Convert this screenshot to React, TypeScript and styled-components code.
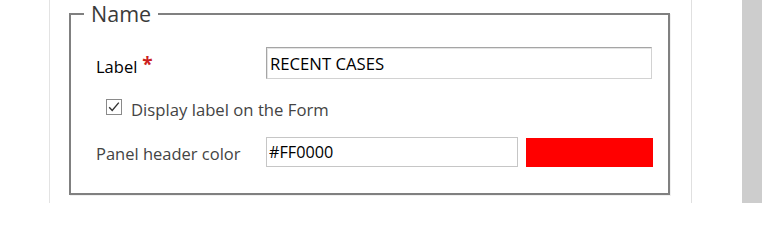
import React from "react";
import styled, { createGlobalStyle } from "styled-components";

const GlobalStyle = createGlobalStyle`
  html, body {
    margin: 0;
    padding: 0;
    background: #ffffff;
  }
  body {
    font-family: "Open Sans", "Noto Sans", "Liberation Sans", sans-serif;
  }
`;

const Page = styled.div`
  display: flex;
  width: 763px;
  height: 203px;
  overflow: hidden;
  background: #ffffff;
`;

const Gutter = styled.div`
  width: 49px;
  flex: none;
  border-right: 1px solid #e3e3e3;
`;

const Content = styled.div`
  flex: 1;
  padding-left: 19px;
`;

const SidePane = styled.div`
  width: 50px;
  flex: none;
  border-left: 1px solid #e0e0e0;
`;

const Scrollbar = styled.div`
  width: 20px;
  flex: none;
  background: #cdcdcd;
  border-right: 1px solid #ffffff;
`;

const Group = styled.fieldset`
  box-sizing: border-box;
  width: 601px;
  margin: 0;
  padding: 0;
  border: 2px solid #808080;
  box-shadow: 1px 1px 0 #f0f0f0;
  min-inline-size: 0;
`;

const Legend = styled.legend`
  margin-left: 13px;
  padding: 0 7px;
  font-size: 21.5px;
  line-height: 28px;
  color: #3a3a3a;
`;

const Body = styled.div`
  display: flex;
  flex-direction: column;
  gap: 17px;
  padding: 19px 16px 26px 25px;
`;

const FieldRow = styled.div<{ $cols: string; $height: number }>`
  display: grid;
  grid-template-columns: ${(p) => p.$cols};
  column-gap: 8px;
  height: ${(p) => p.$height}px;
  align-items: stretch;
`;

const FieldLabel = styled.div<{ $tone: "strong" | "soft"; $shift: number }>`
  display: flex;
  align-items: center;
  padding-top: ${(p) => p.$shift}px;
  font-size: 16.5px;
  color: ${(p) => (p.$tone === "strong" ? "#000000" : "#444444")};
  white-space: nowrap;
`;

const Required = styled.span`
  color: #cc1f1f;
  font-size: 19px;
  font-weight: 700;
  margin-left: 5px;
  position: relative;
  top: -2px;
`;

const TextBox = styled.input<{ $bevel?: boolean }>`
  box-sizing: border-box;
  width: 100%;
  height: 100%;
  margin: 0;
  padding: 0 0 0 ${(p) => (p.$bevel ? 3 : 2)}px;
  font-family: "Open Sans", "Noto Sans", "Liberation Sans", sans-serif;
  font-size: ${(p) => (p.$bevel ? 16.7 : 16.2)}px;
  color: #000000;
  background: #ffffff;
  outline: none;
  border: 1px solid;
  border-color: ${(p) =>
    p.$bevel ? "#a5a5a5 #d2d2d2 #d2d2d2 #a5a5a5" : "#c6c6c6"};
  box-shadow: ${(p) => (p.$bevel ? "inset 1px 1px 0 #e4e4e4" : "none")};
  border-radius: 0;
`;

const Swatch = styled.div<{ $color: string }>`
  background: ${(p) => p.$color};
  margin-top: 1px;
`;

const CheckRow = styled.label`
  display: flex;
  align-items: center;
  gap: 9px;
  height: 25px;
  padding-left: 10px;
`;

const CheckBox = styled.span`
  box-sizing: border-box;
  width: 16px;
  height: 16px;
  flex: none;
  border: 1px solid #8a8a8a;
  background: #ffffff;
  display: flex;
  align-items: center;
  justify-content: center;
  margin-top: -1px;
`;

const CheckText = styled.span`
  font-size: 16.7px;
  color: #444444;
  padding-top: 3px;
  white-space: nowrap;
`;

export default function App() {
  const color = "#FF0000";
  return (
    <>
      <GlobalStyle />
      <Page>
        <Gutter />
        <Content>
          <Group>
            <Legend>Name</Legend>
            <Body>
              <FieldRow $cols="162px 1fr" $height={31}>
                <FieldLabel $tone="strong" $shift={6}>
                  Label<Required>*</Required>
                </FieldLabel>
                <TextBox $bevel readOnly value="RECENT CASES" />
              </FieldRow>
              <CheckRow>
                <CheckBox>
                  <svg width="14" height="14" viewBox="0 0 14 14">
                    <path
                      d="M2.2 7.2 L5.2 10.4 L11.8 2.6"
                      fill="none"
                      stroke="#333333"
                      strokeWidth="1.4"
                    />
                  </svg>
                </CheckBox>
                <CheckText>Display label on the Form</CheckText>
              </CheckRow>
              <FieldRow $cols="162px 252px 127px" $height={30}>
                <FieldLabel $tone="soft" $shift={3}>
                  Panel header color
                </FieldLabel>
                <TextBox readOnly value={color} />
                <Swatch $color={color} />
              </FieldRow>
            </Body>
          </Group>
        </Content>
        <SidePane />
        <Scrollbar />
      </Page>
    </>
  );
}
